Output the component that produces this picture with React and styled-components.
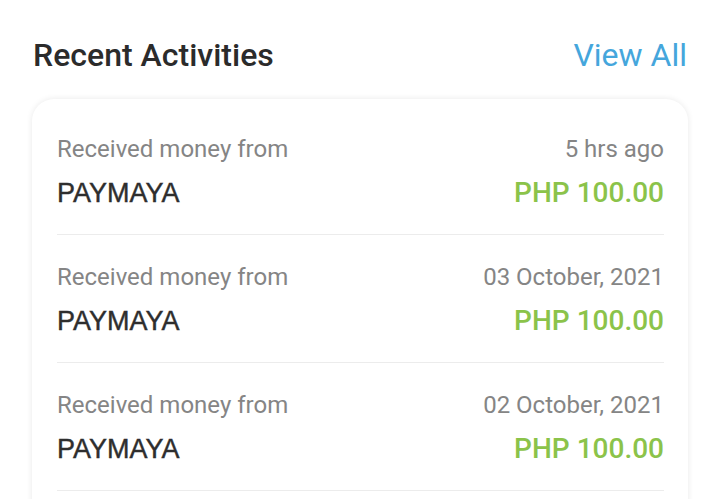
import React from "react";
import styled, { createGlobalStyle } from "styled-components";

const GlobalStyle = createGlobalStyle`
  body {
    margin: 0;
    background: #ffffff;
    font-family: Roboto, "Noto Sans", sans-serif;
  }
`;

const Section = styled.section`
  padding: 36px 31px 0 32px;
  width: 719px;
  box-sizing: border-box;
`;

const Header = styled.div`
  display: flex;
  justify-content: space-between;
  align-items: center;
  padding: 0 1px 0 1px;
  margin-bottom: 25px;
`;

const Title = styled.h2`
  margin: 0;
  font-size: 32px;
  font-weight: 500;
  color: #2b2b2b;
  line-height: 38px;
`;

const ViewAll = styled.a`
  font-size: 32px;
  color: #45a6dc;
  text-decoration: none;
  line-height: 38px;
`;

const Card = styled.div`
  background: #fff;
  border-radius: 22px;
  box-shadow: 0 0 6px rgba(0, 0, 0, 0.09);
  padding: 8px 24px 0 25px;
  height: 420px;
`;

const Row = styled.div`
  display: flex;
  justify-content: space-between;
  align-items: flex-end;
  padding: 28px 0 25px 0;
  border-bottom: 1px solid #ececec;
`;

const Col = styled.div`
  display: flex;
  flex-direction: column;
  align-items: ${(p) => (p.$right ? "flex-end" : "flex-start")};
  gap: 14px;
`;

const Label = styled.span`
  font-size: 24px;
  line-height: 28px;
  color: #858585;
`;

const Name = styled.span`
  font-family: "Liberation Sans", Arial, sans-serif;
  font-size: 27px;
  line-height: 32px;
  color: #2e2e2e;
  -webkit-text-stroke: 0.4px #2e2e2e;
`;

const Amount = styled.span`
  font-size: 28px;
  line-height: 32px;
  font-weight: 500;
  color: #8bc34a;
`;

const activities = [
  { from: "PAYMAYA", when: "5 hrs ago", amount: "PHP 100.00" },
  { from: "PAYMAYA", when: "03 October, 2021", amount: "PHP 100.00" },
  { from: "PAYMAYA", when: "02 October, 2021", amount: "PHP 100.00" },
];

export default function App() {
  return (
    <>
      <GlobalStyle />
      <Section>
        <Header>
          <Title>Recent Activities</Title>
          <ViewAll href="#">View All</ViewAll>
        </Header>
        <Card>
          {activities.map((a, i) => (
            <Row key={i}>
              <Col>
                <Label>Received money from</Label>
                <Name>{a.from}</Name>
              </Col>
              <Col $right>
                <Label>{a.when}</Label>
                <Amount>{a.amount}</Amount>
              </Col>
            </Row>
          ))}
        </Card>
      </Section>
    </>
  );
}
